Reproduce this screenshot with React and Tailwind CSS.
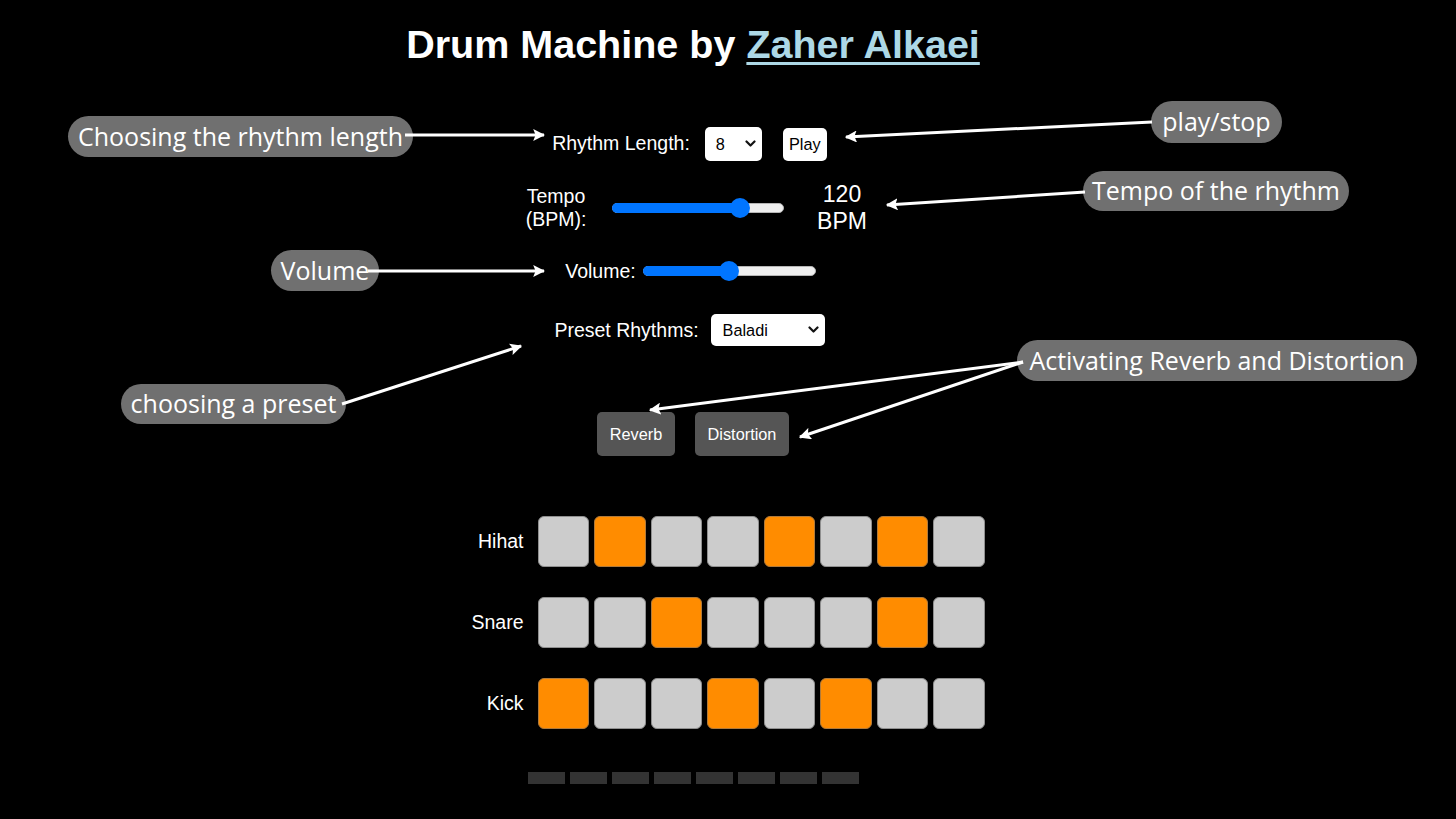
import React from "react";

const rows = [
  { name: "Hihat", on: [1, 4, 6] },
  { name: "Snare", on: [2, 6] },
  { name: "Kick", on: [0, 3, 5] },
];

function Chevron() {
  return (
    <svg width="11" height="8" viewBox="0 0 11 8" className="shrink-0">
      <path d="M1.5 1.5 L5.5 5.5 L9.5 1.5" fill="none" stroke="#111" strokeWidth="2.2" strokeLinecap="round" strokeLinejoin="round" />
    </svg>
  );
}

function Slider({ width, fraction }) {
  const thumbX = width * fraction;
  return (
    <div className="relative h-[20px] shrink-0" style={{ width }}>
      <div className="absolute left-0 right-0 top-[5px] h-[10px] rounded-full bg-[#efefef] border border-[#b5b5b5]" />
      <div className="absolute left-0 top-[5px] h-[10px] rounded-l-full bg-[#0075ff]" style={{ width: thumbX }} />
      <div className="absolute top-0 h-[20px] w-[20px] rounded-full bg-[#0075ff]" style={{ left: thumbX - 10 }} />
    </div>
  );
}

function Pill({ left, top, width, height, children }) {
  return (
    <div
      className="absolute flex items-center justify-center rounded-full bg-[#707070] text-white text-[25px] whitespace-nowrap"
      style={{ left, top, width, height, fontFamily: '"Open Sans", "Noto Sans", sans-serif' }}
    >
      {children}
    </div>
  );
}

export default function App() {
  return (
    <div
      className="relative w-[1456px] h-[819px] bg-black overflow-hidden text-white"
      style={{ fontFamily: '"Liberation Sans", Arial, sans-serif' }}
    >
      <div className="flex flex-col items-center pr-[70px]">
        <h1 className="mt-[22px] text-[39.5px] leading-[45px] font-bold whitespace-nowrap">
          Drum Machine by <span className="text-[#add8e6] underline decoration-[3px] underline-offset-[4px]">Zaher Alkaei</span>
        </h1>

        <div className="mt-[60px] flex items-center pr-[7px] text-[19.5px]">
          <span>Rhythm Length:</span>
          <div className="ml-[15px] flex h-[34px] w-[57px] items-center justify-between rounded-[5px] bg-white pl-[11px] pr-[6px] text-[16.3px] text-black">
            <span>8</span>
            <Chevron />
          </div>
          <div className="ml-[21px] flex h-[33px] w-[44px] items-center justify-center rounded-[5px] bg-white text-[16.3px] text-black">
            Play
          </div>
        </div>

        <div className="mt-[20px] flex items-center pl-[7px]">
          <div className="w-[62px] text-center text-[19.5px] leading-[22.4px]">
            <div>Tempo</div>
            <div>(BPM):</div>
          </div>
          <div className="ml-[25px]">
            <Slider width={172} fraction={0.744} />
          </div>
          <div className="ml-[32px] w-[52px] text-center text-[23px] leading-[26.5px]">
            <div>120</div>
            <div>BPM</div>
          </div>
        </div>

        <div className="mt-[26px] flex items-center pr-[5px] text-[19.5px] leading-[22.4px]">
          <span>Volume:</span>
          <div className="ml-[7px]">
            <Slider width={173} fraction={0.497} />
          </div>
        </div>

        <div className="mt-[32px] flex items-center pr-[7px] text-[19.5px] leading-[22.4px]">
          <span>Preset Rhythms:</span>
          <div className="ml-[12px] flex h-[32px] w-[114px] items-center justify-between rounded-[5px] bg-white pl-[12px] pr-[6px] text-[16.3px] text-black">
            <span>Baladi</span>
            <Chevron />
          </div>
        </div>

        <div className="mt-[66px] flex items-center text-[16.3px]">
          <div className="flex h-[44px] w-[78px] items-center justify-center rounded-[5px] bg-[#555555]">Reverb</div>
          <div className="ml-[20px] flex h-[44px] w-[94px] items-center justify-center rounded-[5px] bg-[#555555]">Distortion</div>
        </div>

        <div className="mt-[60px] flex flex-col gap-[30px]">
          {rows.map((r) => (
            <div key={r.name} className="flex items-center">
              <div className="w-[122px] text-right text-[19.5px]">{r.name}</div>
              <div className="ml-[14px] flex gap-[5px]">
                {Array.from({ length: 8 }).map((_, i) => (
                  <div
                    key={i}
                    className={
                      r.on.includes(i)
                        ? "h-[51px] w-[51.5px] rounded-[6px] border border-[#b07a3a] bg-[#ff8c00]"
                        : "h-[51px] w-[51.5px] rounded-[6px] border border-[#8f8f8f] bg-[#cccccc]"
                    }
                  />
                ))}
              </div>
            </div>
          ))}
        </div>

        <div className="mt-[43px] flex gap-[5px]">
          {Array.from({ length: 8 }).map((_, i) => (
            <div key={i} className="h-[12px] w-[37px] bg-[#333333]" />
          ))}
        </div>
      </div>

      <Pill left={68} top={116} width={345} height={41}>Choosing the rhythm length</Pill>
      <Pill left={1151} top={101} width={131} height={42}>play/stop</Pill>
      <Pill left={1083} top={171} width={266} height={40}>Tempo of the rhythm</Pill>
      <Pill left={271} top={250} width={108} height={41}>Volume</Pill>
      <Pill left={121} top={384} width={225} height={40}>choosing a preset</Pill>
      <Pill left={1017} top={340} width={400} height={41}>Activating Reverb and Distortion</Pill>

      <svg className="absolute left-0 top-0 pointer-events-none" width="1456" height="819">
        <defs>
          <marker id="ah" markerWidth="4" markerHeight="4" refX="3.6" refY="2" orient="auto" markerUnits="strokeWidth">
            <path d="M0,0 L4,2 L0,4 L0.8,2 z" fill="white" />
          </marker>
        </defs>
        <g stroke="white" strokeWidth="3" fill="none" markerEnd="url(#ah)">
          <line x1="405" y1="135" x2="544" y2="135" />
          <line x1="1152" y1="122" x2="846" y2="137" />
          <line x1="1085" y1="192" x2="887" y2="205" />
          <line x1="368" y1="271" x2="544" y2="271" />
          <line x1="342" y1="404" x2="521" y2="346" />
          <line x1="1023" y1="362" x2="650" y2="410" />
          <line x1="1023" y1="362" x2="800" y2="437" />
        </g>
      </svg>
    </div>
  );
}
